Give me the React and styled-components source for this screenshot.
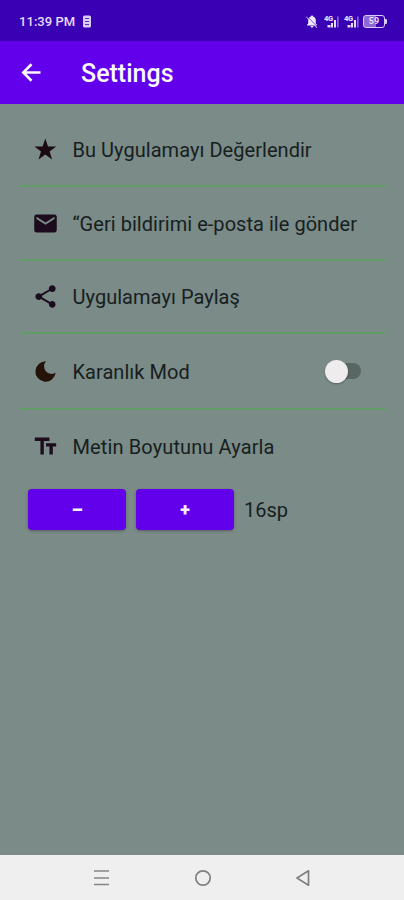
import React, { useState } from 'react';
import styled, { createGlobalStyle } from 'styled-components';
import { MdEmail, MdShare, MdTextFields } from 'react-icons/md';

const GlobalStyle = createGlobalStyle`
  * {
    box-sizing: border-box;
  }
  body {
    margin: 0;
    font-family: Roboto, "Noto Sans", sans-serif;
  }
`;

const Screen = styled.div`
  display: flex;
  flex-direction: column;
  width: 404px;
  height: 900px;
  overflow: hidden;
  background: #7a8b88;
`;

const StatusBar = styled.div`
  display: flex;
  align-items: center;
  flex: none;
  height: 41px;
  padding: 1px 17px 0 19px;
  background: #3900b4;
  color: #e6dcfa;
`;

const Clock = styled.span`
  width: 57px;
  margin-right: 7px;
  font-size: 13px;
  font-weight: 500;
  letter-spacing: 0.05px;
  white-space: nowrap;
`;

const StatusIcons = styled.div`
  display: flex;
  align-items: center;
  margin-left: auto;
`;

const Toolbar = styled.header`
  display: flex;
  align-items: center;
  flex: none;
  height: 63px;
  padding: 0 18px;
  background: #6200ec;
  color: #fbf7ff;
  svg {
    margin-top: -1px;
  }
`;

const Title = styled.h1`
  margin: 2px 0 0 36px;
  font-size: 25px;
  font-weight: 500;
  letter-spacing: 0px;
`;

const List = styled.main`
  flex: 1;
  padding: 9px 19px 0 20px;
`;

const Row = styled.div`
  display: flex;
  align-items: center;
  height: ${props => props.$height || 74}px;
  padding: 0 24px 0 12px;
  border-bottom: ${props => (props.$last ? 'none' : '2px solid #619c67')};
  color: #1b0b1c;
`;

const Label = styled.span`
  margin: 1px 0 0 13.500px;
  font-size: 20px;
  letter-spacing: ${props => props.$spacing || 0.04}px;
  white-space: nowrap;
  color: #17201f;
`;

const Switch = styled.button`
  display: flex;
  align-items: center;
  justify-content: ${props => (props.$on ? 'flex-end' : 'flex-start')};
  width: 36px;
  height: 24px;
  margin-left: auto;
  padding: 0;
  border: none;
  background: none;
`;

const Track = styled.span`
  display: flex;
  align-items: center;
  justify-content: inherit;
  width: 36px;
  height: 16px;
  border-radius: 8px;
  background: linear-gradient(#586664, #586664) right / 28px 16px no-repeat;
`;

const Thumb = styled.span`
  flex: none;
  width: 23px;
  height: 23px;
  border-radius: 50%;
  background: #efeced;
  box-shadow: 0 1px 2px rgba(0, 0, 0, 0.3);
`;

const SizeControls = styled.div`
  display: flex;
  align-items: center;
  gap: 10px;
  padding: 6px 0 0 8px;
`;

const SizeButton = styled.button`
  width: 98px;
  height: 41px;
  padding: 0;
  border: none;
  border-radius: 4px;
  background: #6200ec;
  color: #f6efff;
  font-family: inherit;
  font-size: 18px;
  font-weight: 900;
  box-shadow: 0 1px 3px rgba(0, 0, 0, 0.3);
`;

const SizeValue = styled.span`
  font-size: 20px;
  color: #17201f;
`;

const NavBar = styled.nav`
  display: flex;
  align-items: center;
  justify-content: space-between;
  flex: none;
  height: 45px;
  padding: 0 92px 0 93px;
  background: #efefef;
`;

const BackArrow = () => (
  <svg width="27" height="27" viewBox="0 0 24 24">
    <path d="M20 12H5.500M12 4.700L4.700 12l7.300 7.300" fill="none" stroke="currentColor" strokeWidth="2.300" />
  </svg>
);

const PhoneIcon = () => (
  <svg width="8" height="13" viewBox="0 0 8 13">
    <rect x="0" y="0.5" width="8" height="12" rx="1.5" fill="#d9ccf5" />
    <path d="M2 3.5h4M2 6.5h4M2 9.5h4" stroke="#5a2fc4" strokeWidth="1" />
  </svg>
);

const MutedBell = () => (
  <svg width="12" height="13" viewBox="0 0 12 13">
    <path d="M6 .5c.7 0 1 .4 1 1 1.900.5 2.800 2 2.800 3.900v3.100l1.200 1.300v.8H1v-.8l1.200-1.300V5.400C2.200 3.500 3.100 2 5 1.500c0-.6.300-1 1-1zM4.500 11h3c0 .9-.6 1.500-1.500 1.500S4.500 11.900 4.500 11z" fill="#efe8fc" />
    <path d="M1.200 1.600l10.400 10.400" stroke="#3900b4" strokeWidth="0.700" />
    <path d="M.4 2l10.600 10.600" stroke="#efe8fc" strokeWidth="1" />
  </svg>
);

const Network = styled.span`
  position: relative;
  display: flex;
  width: 16px;
  height: 13px;
  margin-left: ${props => props.$gap}px;
`;

const NetworkTag = styled.span`
  position: absolute;
  top: -1px;
  left: 0;
  font-size: 7.500px;
  font-weight: 900;
  line-height: 9px;
  letter-spacing: -0.3px;
`;

const Signal = ({ gap }) => (
  <Network $gap={gap}>
    <svg width="16" height="13" viewBox="0 0 16 13">
      <path d="M3.500 10h3v2.500h-3zM7 8h2v4.500H7zM10 5h2v7.500h-2z" fill="#e6dcfa" />
      <path d="M13 1.500h1.700v11H13z" fill="#8260d2" />
    </svg>
    <NetworkTag>4G</NetworkTag>
  </Network>
);

const Battery = styled.span`
  position: relative;
  display: flex;
  align-items: center;
  justify-content: center;
  width: 22px;
  height: 13px;
  margin: 0 2px 0 3px;
  border: 1px solid #d9ccf5;
  border-radius: 3px;
  background: linear-gradient(90deg, #8c69d6 60%, #3900b4 60%);
  font-size: 9px;
  font-weight: 700;
  line-height: 10px;
  &::after {
    content: '';
    position: absolute;
    right: -3px;
    top: 3px;
    width: 2px;
    height: 5px;
    border-radius: 0 1px 1px 0;
    background: #d9ccf5;
  }
`;

const StarIcon = () => (
  <svg width="27" height="27" viewBox="0 0 27 27">
    <path d="M13.300 2.600l2.700 7.900h8.200l-6.600 5 2.500 8-6.800-4.900-6.800 4.900 2.500-8-6.600-5h8.200z" fill="#1c0a12" />
  </svg>
);

const MoonIcon = () => (
  <svg width="27" height="27" viewBox="0 0 27 27">
    <path d="M14 3.300A10.200 10.200 0 1 0 23.700 14.800A7.600 7.600 0 0 1 14 3.300Z" fill="#251208" />
  </svg>
);

const App = () => {
  const [dark, setDark] = useState(false);
  const [size, setSize] = useState(16);

  return (
    <Screen>
      <GlobalStyle />
      <StatusBar>
        <Clock>11:39 PM</Clock>
        <PhoneIcon />
        <StatusIcons>
          <MutedBell />
          <Signal gap={6} />
          <Signal gap={4} />
          <Battery>59</Battery>
        </StatusIcons>
      </StatusBar>
      <Toolbar>
        <BackArrow />
        <Title>Settings</Title>
      </Toolbar>
      <List>
        <Row>
          <StarIcon />
          <Label>Bu Uygulamayı Değerlendir</Label>
        </Row>
        <Row>
          <MdEmail size={27} />
          <Label>“Geri bildirimi e-posta ile gönder</Label>
        </Row>
        <Row $height={73}>
          <MdShare size={27} />
          <Label>Uygulamayı Paylaş</Label>
        </Row>
        <Row $height={76}>
          <MoonIcon />
          <Label>Karanlık Mod</Label>
          <Switch $on={dark} onClick={() => setDark(!dark)}>
            <Track>
              <Thumb />
            </Track>
          </Switch>
        </Row>
        <Row $last $height={73}>
          <MdTextFields size={27} />
          <Label $spacing={0.12}>Metin Boyutunu Ayarla</Label>
        </Row>
        <SizeControls>
          <SizeButton onClick={() => setSize(size - 1)}>–</SizeButton>
          <SizeButton onClick={() => setSize(size + 1)}>+</SizeButton>
          <SizeValue>{size}sp</SizeValue>
        </SizeControls>
      </List>
      <NavBar>
        <svg width="18" height="18" viewBox="0 0 18 18">
          <path d="M1 2h15M1 9h15M1 15.500h15" stroke="#858585" strokeWidth="1.700" />
        </svg>
        <svg width="18" height="18" viewBox="0 0 18 18">
          <circle cx="9" cy="9" r="7.200" fill="none" stroke="#808080" strokeWidth="1.700" />
        </svg>
        <svg width="18" height="18" viewBox="0 0 18 18">
          <path d="M14.500 1.800v14.400L3 9z" fill="none" stroke="#808080" strokeWidth="1.700" strokeLinejoin="round" />
        </svg>
      </NavBar>
    </Screen>
  );
};

export default App;
